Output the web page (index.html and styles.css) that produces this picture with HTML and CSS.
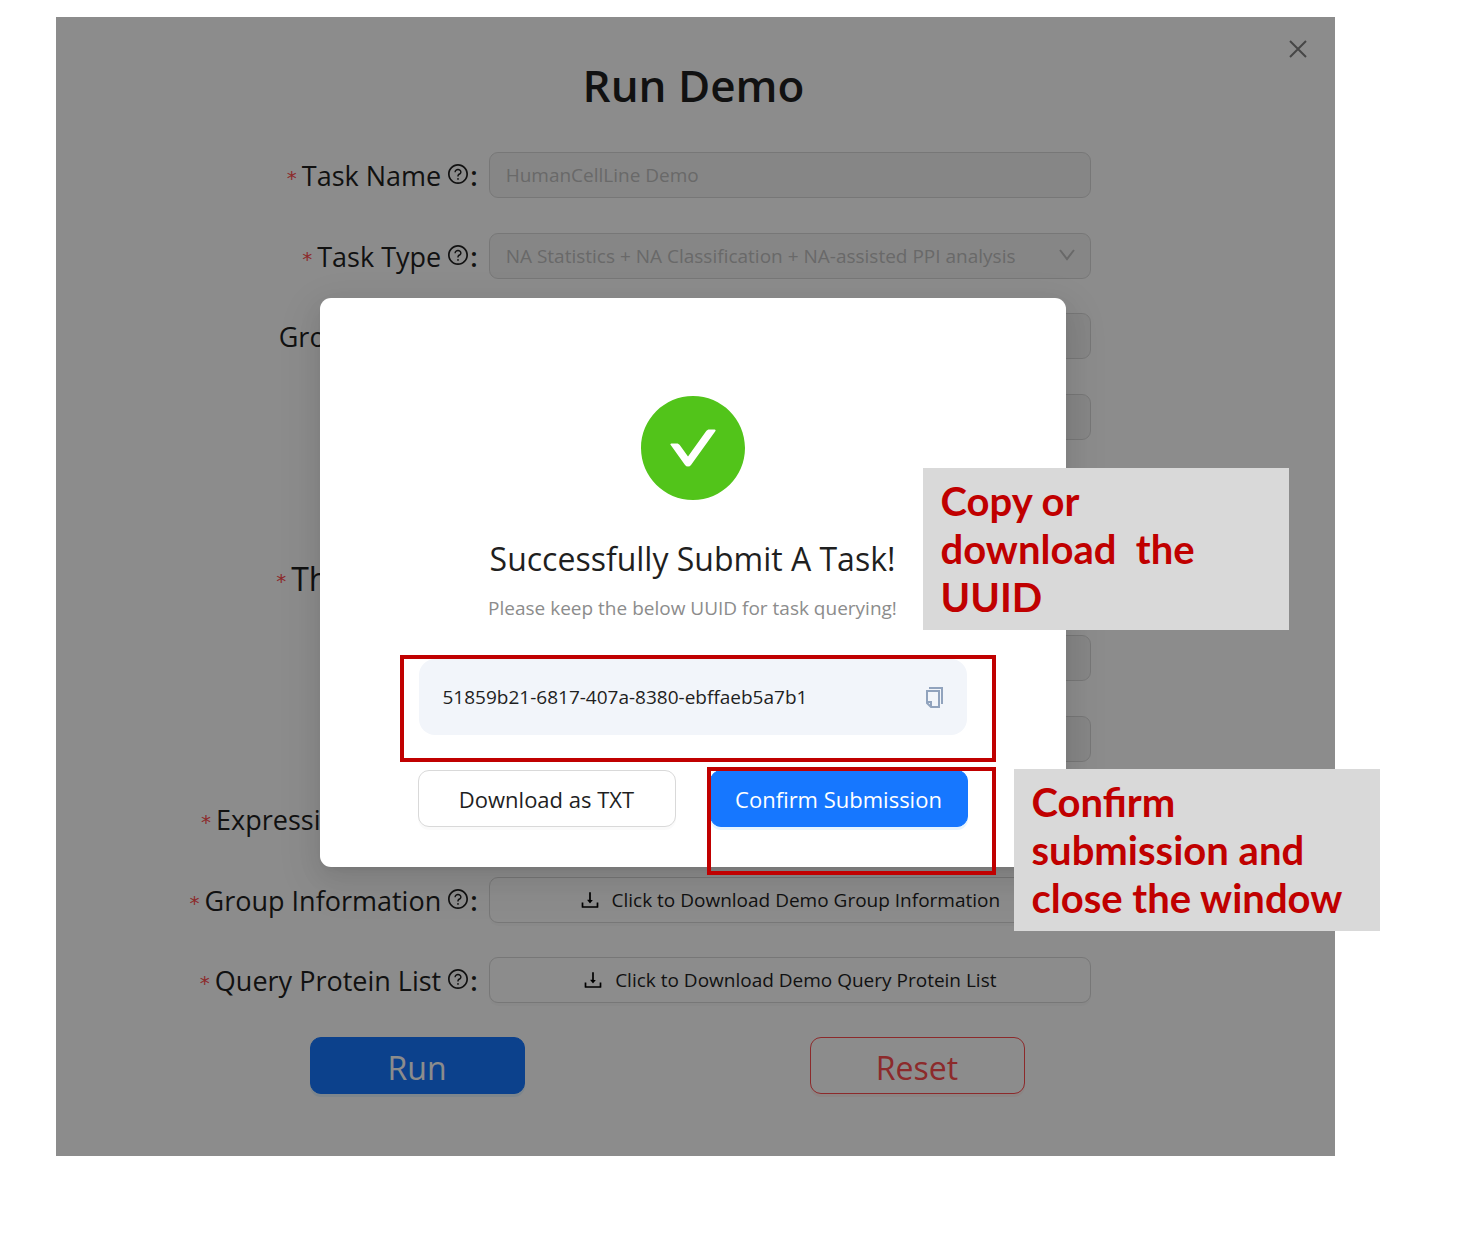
FILE: index.html
```html
<!DOCTYPE html>
<html lang="en">
<head>
<meta charset="utf-8">
<title>Run Demo</title>
<link rel="stylesheet" href="styles.css">
</head>
<body>
<svg class="defs" aria-hidden="true">
  <symbol id="question" viewBox="64 64 896 896"><path d="M512 64C264.600 64 64 264.600 64 512s200.600 448 448 448 448-200.600 448-448S759.400 64 512 64zm0 820c-205.400 0-372-166.600-372-372s166.600-372 372-372 372 166.600 372 372-166.600 372-372 372z"/><path d="M623.600 316.700C593.600 290.400 554 276 512 276s-81.600 14.500-111.600 40.700C369.200 344 352 380.700 352 420v7.600c0 4.400 3.600 8 8 8h48c4.400 0 8-3.600 8-8V420c0-44.100 43.100-80 96-80s96 35.900 96 80c0 31.100-22 59.600-56.100 72.700-21.200 8.100-39.200 22.300-52.100 40.900-13.100 19-19.900 41.800-19.900 64.900V620c0 4.400 3.600 8 8 8h48c4.400 0 8-3.600 8-8v-22.700a48.300 48.300 0 0130.900-44.800c59-22.700 97.100-74.700 97.100-132.500.1-39.300-17.100-76-48.300-103.300zM472 732a40 40 0 1080 0 40 40 0 10-80 0z"/></symbol>
  <symbol id="download" viewBox="64 64 896 896"><path d="M505.700 661a8 8 0 0012.600 0l112-141.700c4.100-5.200.4-12.900-6.300-12.900h-74.100V168c0-4.400-3.600-8-8-8h-60c-4.400 0-8 3.600-8 8v338.300H400c-6.700 0-10.400 7.700-6.300 12.900l112 141.800zM878 626h-60c-4.400 0-8 3.600-8 8v154H214V634c0-4.400-3.600-8-8-8h-60c-4.400 0-8 3.600-8 8v198c0 17.700 14.300 32 32 32h684c17.700 0 32-14.300 32-32V634c0-4.400-3.600-8-8-8z"/></symbol>
</svg>

<main class="shell">
  <button class="close" type="button" aria-label="Close"><svg viewBox="0 0 18 18"><path d="M1 1L17 17M17 1L1 17"/></svg></button>
  <h1 class="title">Run Demo</h1>
  <form class="form">
    <div class="rows">
      <div class="row"><label class="label required" for="name">Task Name<svg class="help"><use href="#question"/></svg><span class="colon">:</span></label><input class="field" id="name" value="HumanCellLine Demo" disabled></div>
      <div class="row"><label class="label required" for="type">Task Type<svg class="help"><use href="#question"/></svg><span class="colon">:</span></label>
        <div class="select"><select class="field" id="type" disabled><option>NA Statistics + NA Classification + NA-assisted PPI analysis</option></select><svg class="chevron" viewBox="0 0 16 12"><path d="M1 1L8 10L15 1"/></svg></div></div>
      <div class="row"><label class="label" for="group">Group Name<svg class="help"><use href="#question"/></svg><span class="colon">:</span></label><input class="field" id="group" disabled></div>
      <div class="row"><span></span><input class="field" aria-label="Second group" disabled></div>
      <div class="row"><span></span><input class="field" aria-label="Third group" disabled></div>
      <div class="row"><label class="label large required" for="limit">Threshold<svg class="help"><use href="#question"/></svg><span class="colon">:</span></label><input class="field" id="limit" disabled></div>
      <div class="row"><span></span><input class="field" aria-label="Second threshold" disabled></div>
      <div class="row"><span></span><input class="field" aria-label="Third threshold" disabled></div>
      <div class="row"><span class="label required">Expression Matrix<svg class="help"><use href="#question"/></svg><span class="colon">:</span></span><button class="field file" type="button" aria-label="Expression matrix"></button></div>
      <div class="row"><span class="label required">Group Information<svg class="help"><use href="#question"/></svg><span class="colon">:</span></span><button class="field file" type="button"><svg class="down"><use href="#download"/></svg>Click to Download Demo Group Information</button></div>
      <div class="row"><span class="label required">Query Protein List<svg class="help"><use href="#question"/></svg><span class="colon">:</span></span><button class="field file" type="button"><svg class="down"><use href="#download"/></svg>Click to Download Demo Query Protein List</button></div>
    </div>
    <div class="actions">
      <button class="action run" type="button">Run</button>
      <button class="action reset" type="button">Reset</button>
    </div>
  </form>

  <div class="mask">
    <section class="modal" role="dialog" aria-labelledby="done">
      <svg class="success" viewBox="64 64 896 896" aria-hidden="true"><path d="M512 64C264.600 64 64 264.600 64 512s200.600 448 448 448 448-200.600 448-448S759.400 64 512 64zm193.500 301.700l-210.600 292a31.800 31.800 0 01-51.700 0L318.500 484.900c-3.800-5.300 0-12.700 6.500-12.700h46.900c10.200 0 19.900 4.900 25.900 13.300l71.200 98.800 157.200-218c6-8.300 15.600-13.300 25.900-13.300H699c6.500 0 10.300 7.400 6.500 12.700z"/></svg>
      <h2 class="heading" id="done">Successfully Submit A Task!</h2>
      <p class="hint">Please keep the below UUID for task querying!</p>
      <div class="uuid">
        <span>51859b21-6817-407a-8380-ebffaeb5a7b1</span>
        <button class="copy" type="button" aria-label="Copy UUID"><svg viewBox="0 0 18 22"><path d="M4 2H17V18M2 5H14V21H6L2 17ZM2 16H6V20"/></svg></button>
      </div>
      <div class="choices">
        <button class="choice" type="button">Download as TXT</button>
        <button class="choice primary" type="button">Confirm Submission</button>
      </div>
      <div class="mark mark-uuid"></div>
      <div class="mark mark-confirm"></div>
      <p class="note note-uuid">Copy or<br>download&nbsp; the<br>UUID</p>
      <p class="note note-confirm">Confirm<br>submission and<br>close the window</p>
    </section>
  </div>
</main>
</body>
</html>
```
FILE: styles.css
```css
* { box-sizing: border-box; }
body {
  margin: 0;
  padding: 17px 141px 78px 56px;
  background: #fff;
  color: #1f1f1f;
  font-family: "Open Sans", "Noto Sans", sans-serif;
}
button, input, select { font: inherit; color: inherit; }
h1, h2, p { margin: 0; font-weight: 400; }
.defs { position: absolute; width: 0; height: 0; }

.shell { position: relative; padding: 38px 0 62px; background: #fff; }
.close { position: absolute; top: 22px; right: 27px; width: 20px; height: 20px; padding: 1px; border: 0; background: none; }
.close svg { display: block; width: 18px; height: 18px; fill: none; stroke: #808080; stroke-width: 2; }
.title { padding-right: 4px; font-size: 44px; font-weight: 600; line-height: 60px; text-align: center; }

.form { padding-top: 37px; }
.rows { display: flex; flex-direction: column; justify-content: space-between; min-height: 851px; padding-right: 244px; }
.row { display: grid; grid-template-columns: 7fr 10fr; column-gap: 11px; align-items: center; }
.label { display: flex; justify-content: flex-end; align-items: center; padding-top: 2px; font-size: 27px; line-height: 44px; white-space: nowrap; }
.large { font-size: 32px; }
.required::before { content: "*"; margin-right: 5px; padding-top: 4px; color: #ff4d4f; font-family: "DejaVu Sans", sans-serif; font-size: 20px; line-height: 20px; }
.help { width: 20px; height: 20px; margin: 0 2px 4px 7px; fill: currentColor; }
.colon { font-size: 27px; font-weight: 600; }
.field {
  width: 100%; height: 46px; padding: 0 16px;
  border: 1px solid #d9d9d9; border-radius: 9px;
  background: #fff; font-size: 19px;
}
.field:disabled { background: #f5f5f5; color: #bfbfbf; opacity: 1; }
.select { position: relative; }
.select .field { display: block; appearance: none; }
.chevron { position: absolute; top: 16px; right: 16px; width: 16px; height: 12px; fill: none; stroke: #bfbfbf; stroke-width: 2; }
.file { display: flex; justify-content: center; align-items: center; gap: 12px; box-shadow: 0 3px 0 rgba(0, 0, 0, .02); }
.down { width: 20px; height: 20px; }

.actions { display: flex; justify-content: space-around; padding: 34px 168px 0 111px; }
.action { width: 215px; height: 57px; padding: 4px 0 0; border: 1px solid; border-radius: 11px; background: #fff; font-size: 32px; line-height: 48px; }
.run { border-color: #1677ff; background: #1677ff; color: #fff; box-shadow: 0 3px 0 rgba(5, 145, 255, .1); }
.reset { color: #ff4d4f; box-shadow: 0 3px 0 rgba(255, 38, 5, .06); }

.mask { position: absolute; inset: 0; display: flex; justify-content: center; align-items: flex-start; padding: 281px 6px 0 0; background: rgba(0, 0, 0, .45); }
.modal {
  position: relative; width: 746px; padding: 98px 98px 40px;
  border-radius: 11px; background: #fff; text-align: center;
  box-shadow: 0 9px 23px rgba(0, 0, 0, .08), 0 4px 9px -6px rgba(0, 0, 0, .12), 0 13px 40px 11px rgba(0, 0, 0, .05);
}
.success { display: block; width: 104px; height: 104px; margin: 0 auto 34px; fill: #52c41a; }
.heading { font-size: 32px; line-height: 50px; }
.hint { margin-top: 8px; color: #8c8c8c; font-size: 19px; line-height: 32px; }
.uuid { display: flex; justify-content: space-between; align-items: center; height: 76px; margin: 35px 1px; padding: 0 24px; border-radius: 16px; background: #f2f5fa; font-size: 19px; }
.copy { padding: 0; border: 0; background: none; }
.copy svg { display: block; width: 18px; height: 22px; fill: none; stroke: #91a3bd; stroke-width: 2; }
.choices { display: flex; justify-content: space-between; }
.choice { width: 258px; height: 57px; padding: 0; border: 1px solid #d9d9d9; border-radius: 11px; background: #fff; font-size: 22px; box-shadow: 0 3px 0 rgba(0, 0, 0, .02); }
.primary { border-color: #1677ff; background: #1677ff; color: #fff; box-shadow: 0 3px 0 rgba(5, 145, 255, .1); }

.mark { position: absolute; border: 4px solid #c00000; pointer-events: none; }
.mark-uuid { top: 357px; left: 80px; width: 596px; height: 107px; }
.mark-confirm { top: 469px; left: 387px; width: 289px; height: 108px; }
.note {
  position: absolute; width: 366px; padding: 9px 18px;
  background: #d9d9d9; color: #c00000; text-align: left;
  font-family: Lato, sans-serif; font-size: 40px; font-weight: 700; line-height: 48px; white-space: nowrap;
}
.note-uuid { top: 170px; left: 603px; }
.note-confirm { top: 471px; left: 694px; }
```
